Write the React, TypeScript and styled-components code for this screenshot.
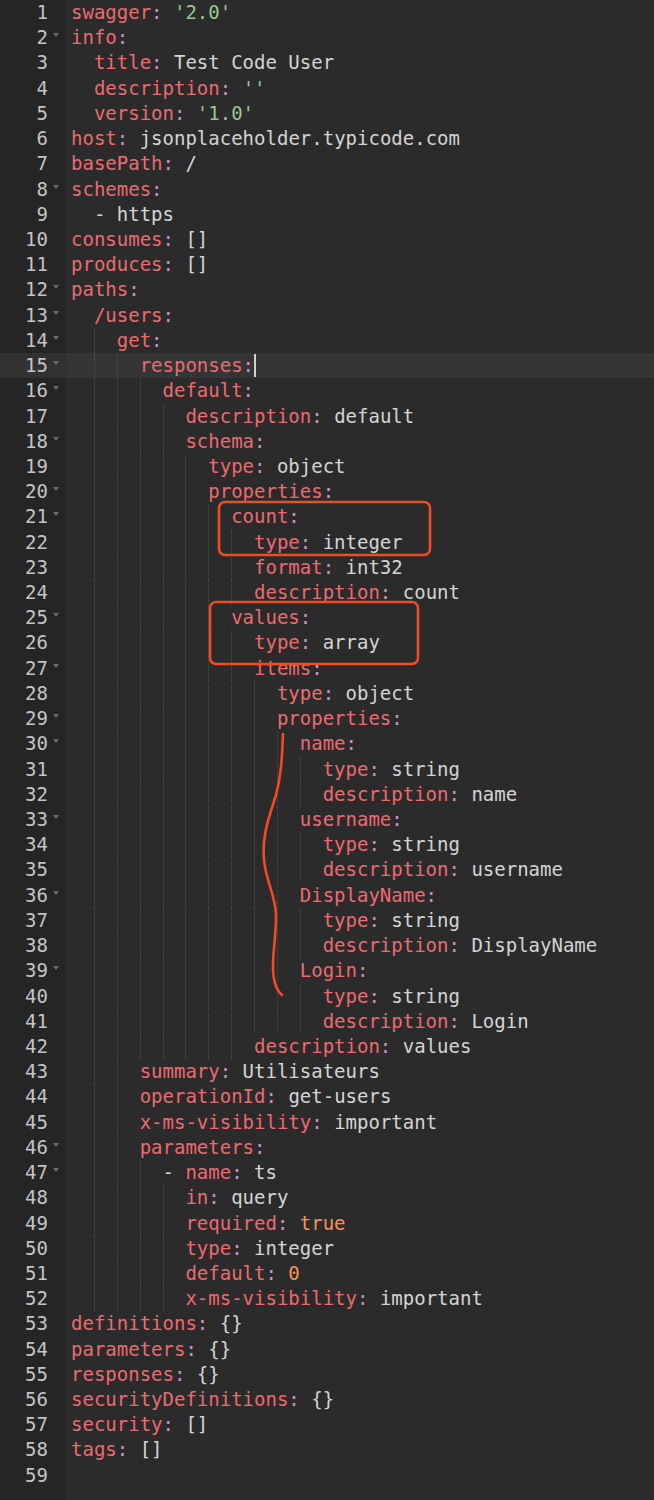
import React from "react";
import styled, { createGlobalStyle } from "styled-components";

const LH = 25.23;

const SOURCE: string[] = [
  "swagger: '2.0'",
  "info:",
  "  title: Test Code User",
  "  description: ''",
  "  version: '1.0'",
  "host: jsonplaceholder.typicode.com",
  "basePath: /",
  "schemes:",
  "  - https",
  "consumes: []",
  "produces: []",
  "paths:",
  "  /users:",
  "    get:",
  "      responses:",
  "        default:",
  "          description: default",
  "          schema:",
  "            type: object",
  "            properties:",
  "              count:",
  "                type: integer",
  "                format: int32",
  "                description: count",
  "              values:",
  "                type: array",
  "                items:",
  "                  type: object",
  "                  properties:",
  "                    name:",
  "                      type: string",
  "                      description: name",
  "                    username:",
  "                      type: string",
  "                      description: username",
  "                    DisplayName:",
  "                      type: string",
  "                      description: DisplayName",
  "                    Login:",
  "                      type: string",
  "                      description: Login",
  "                description: values",
  "      summary: Utilisateurs",
  "      operationId: get-users",
  "      x-ms-visibility: important",
  "      parameters:",
  "        - name: ts",
  "          in: query",
  "          required: true",
  "          type: integer",
  "          default: 0",
  "          x-ms-visibility: important",
  "definitions: {}",
  "parameters: {}",
  "responses: {}",
  "securityDefinitions: {}",
  "security: []",
  "tags: []",
  "",
];

const ACTIVE_LINE = 15;

type Kind = "key" | "colon" | "plain" | "str" | "num";
type Tok = { kind: Kind; text: string };

const indentOf = (s: string) => s.length - s.trimStart().length;

function tokenize(body: string): Tok[] {
  const out: Tok[] = [];
  let rest = body;
  if (rest.startsWith("- ")) {
    out.push({ kind: "plain", text: "- " });
    rest = rest.slice(2);
  }
  const idx = rest.indexOf(":");
  if (idx === -1) {
    if (rest) out.push({ kind: "plain", text: rest });
    return out;
  }
  out.push({ kind: "key", text: rest.slice(0, idx) });
  out.push({ kind: "colon", text: ":" });
  const value = rest.slice(idx + 1);
  if (value.length) {
    const v = value.trim();
    let kind: Kind = "plain";
    if (/^'.*'$/.test(v)) kind = "str";
    else if (/^(true|false|-?\d+(\.\d+)?)$/.test(v)) kind = "num";
    out.push({ kind: "plain", text: " " });
    out.push({ kind, text: v });
  }
  return out;
}

const COLORS: Record<Kind, string> = {
  key: "#ec6a70",
  colon: "#c594c5",
  plain: "#d4d4d4",
  str: "#99c794",
  num: "#f99157",
};

const Global = createGlobalStyle`
  html, body {
    margin: 0;
    padding: 0;
    background: #2b2b2b;
  }
  body {
    font-family: "DejaVu Sans Mono", "Liberation Mono", monospace;
    -webkit-font-smoothing: antialiased;
  }
`;

const Editor = styled.div`
  position: relative;
  display: flex;
  height: 1500px;
  overflow: hidden;
  background: #2b2b2b;
  font-family: "DejaVu Sans Mono", "Liberation Mono", monospace;
  font-size: 19px;
  line-height: ${LH}px;
`;

const Gutter = styled.div`
  width: 66px;
  flex: none;
  background: #252525;
  color: #c4c4c4;
`;

const GutterRow = styled.div<{ $active?: boolean }>`
  display: flex;
  justify-content: flex-end;
  height: ${LH}px;
  background: ${(p) => (p.$active ? "#323232" : "transparent")};
`;

const LineNo = styled.span`
  text-align: right;
`;

const FoldSlot = styled.span`
  width: 18px;
  flex: none;
  display: flex;
  justify-content: flex-start;
  padding: 8px 0 0 5px;
  box-sizing: border-box;
`;

const FoldArrow = styled.span`
  width: 0;
  height: 0;
  border-left: 3.5px solid transparent;
  border-right: 3.5px solid transparent;
  border-top: 4px solid #6c6c6c;
`;

const Code = styled.div`
  flex: 1;
  min-width: 0;
`;

const CodeRow = styled.div<{ $active?: boolean }>`
  height: ${LH}px;
  padding-left: 5px;
  white-space: pre;
  background: ${(p) => (p.$active ? "#353535" : "transparent")};
`;

const Chunk = styled.span<{ $guide?: boolean }>`
  display: inline-block;
  width: 2ch;
  height: ${LH}px;
  vertical-align: top;
  background-image: ${(p) =>
    p.$guide ? "linear-gradient(to bottom, #4f4f4f 50%, transparent 50%)" : "none"};
  background-size: 1px 2px;
  background-repeat: repeat-y;
  background-position: 0 0;
`;

const Token = styled.span<{ $kind: Kind }>`
  color: ${(p) => COLORS[p.$kind]};
`;

const Cursor = styled.span`
  display: inline-block;
  width: 2px;
  height: 23px;
  margin-top: 1px;
  vertical-align: top;
  background: #d0d0d0;
`;

const Overlay = styled.svg`
  position: absolute;
  left: 0;
  top: 0;
  width: 654px;
  height: 1500px;
  pointer-events: none;
`;

export default function App() {
  const lines = SOURCE.map((text, i) => {
    const ind = indentOf(text);
    const next = SOURCE.slice(i + 1).find((l) => l.trim().length > 0);
    const foldable = text.trim().length > 0 && next !== undefined && indentOf(next) > ind;
    return { n: i + 1, ind, body: text.slice(ind), foldable };
  });

  return (
    <>
      <Global />
      <Editor>
        <Gutter>
          {lines.map((l) => (
            <GutterRow key={l.n} $active={l.n === ACTIVE_LINE}>
              <LineNo>{l.n}</LineNo>
              <FoldSlot>{l.foldable && <FoldArrow />}</FoldSlot>
            </GutterRow>
          ))}
        </Gutter>
        <Code>
          {lines.map((l) => (
            <CodeRow key={l.n} $active={l.n === ACTIVE_LINE}>
              {Array.from({ length: Math.floor(l.ind / 2) }, (_, k) => (
                <Chunk key={k} $guide={k > 0}>{"  "}</Chunk>
              ))}
              {tokenize(l.body).map((t, k) => (
                <Token key={k} $kind={t.kind}>
                  {t.text}
                </Token>
              ))}
              {l.n === ACTIVE_LINE && <Cursor />}
            </CodeRow>
          ))}
        </Code>
        <Overlay viewBox="0 0 654 1500">
          <g fill="none" stroke="#f04b24" strokeWidth={2.6} strokeLinecap="round" strokeLinejoin="round">
            <rect x={219} y={502} width={211} height={53} rx={6} />
            <rect x={210} y={602} width={208} height={62} rx={6} />
            <path d="M283,734 C282,760 281,776 276,795 C268,820 262,836 264,860 C266,882 276,896 276,916 C276,936 273,950 273,966 C273,980 276,990 282,995" />
          </g>
        </Overlay>
      </Editor>
    </>
  );
}
